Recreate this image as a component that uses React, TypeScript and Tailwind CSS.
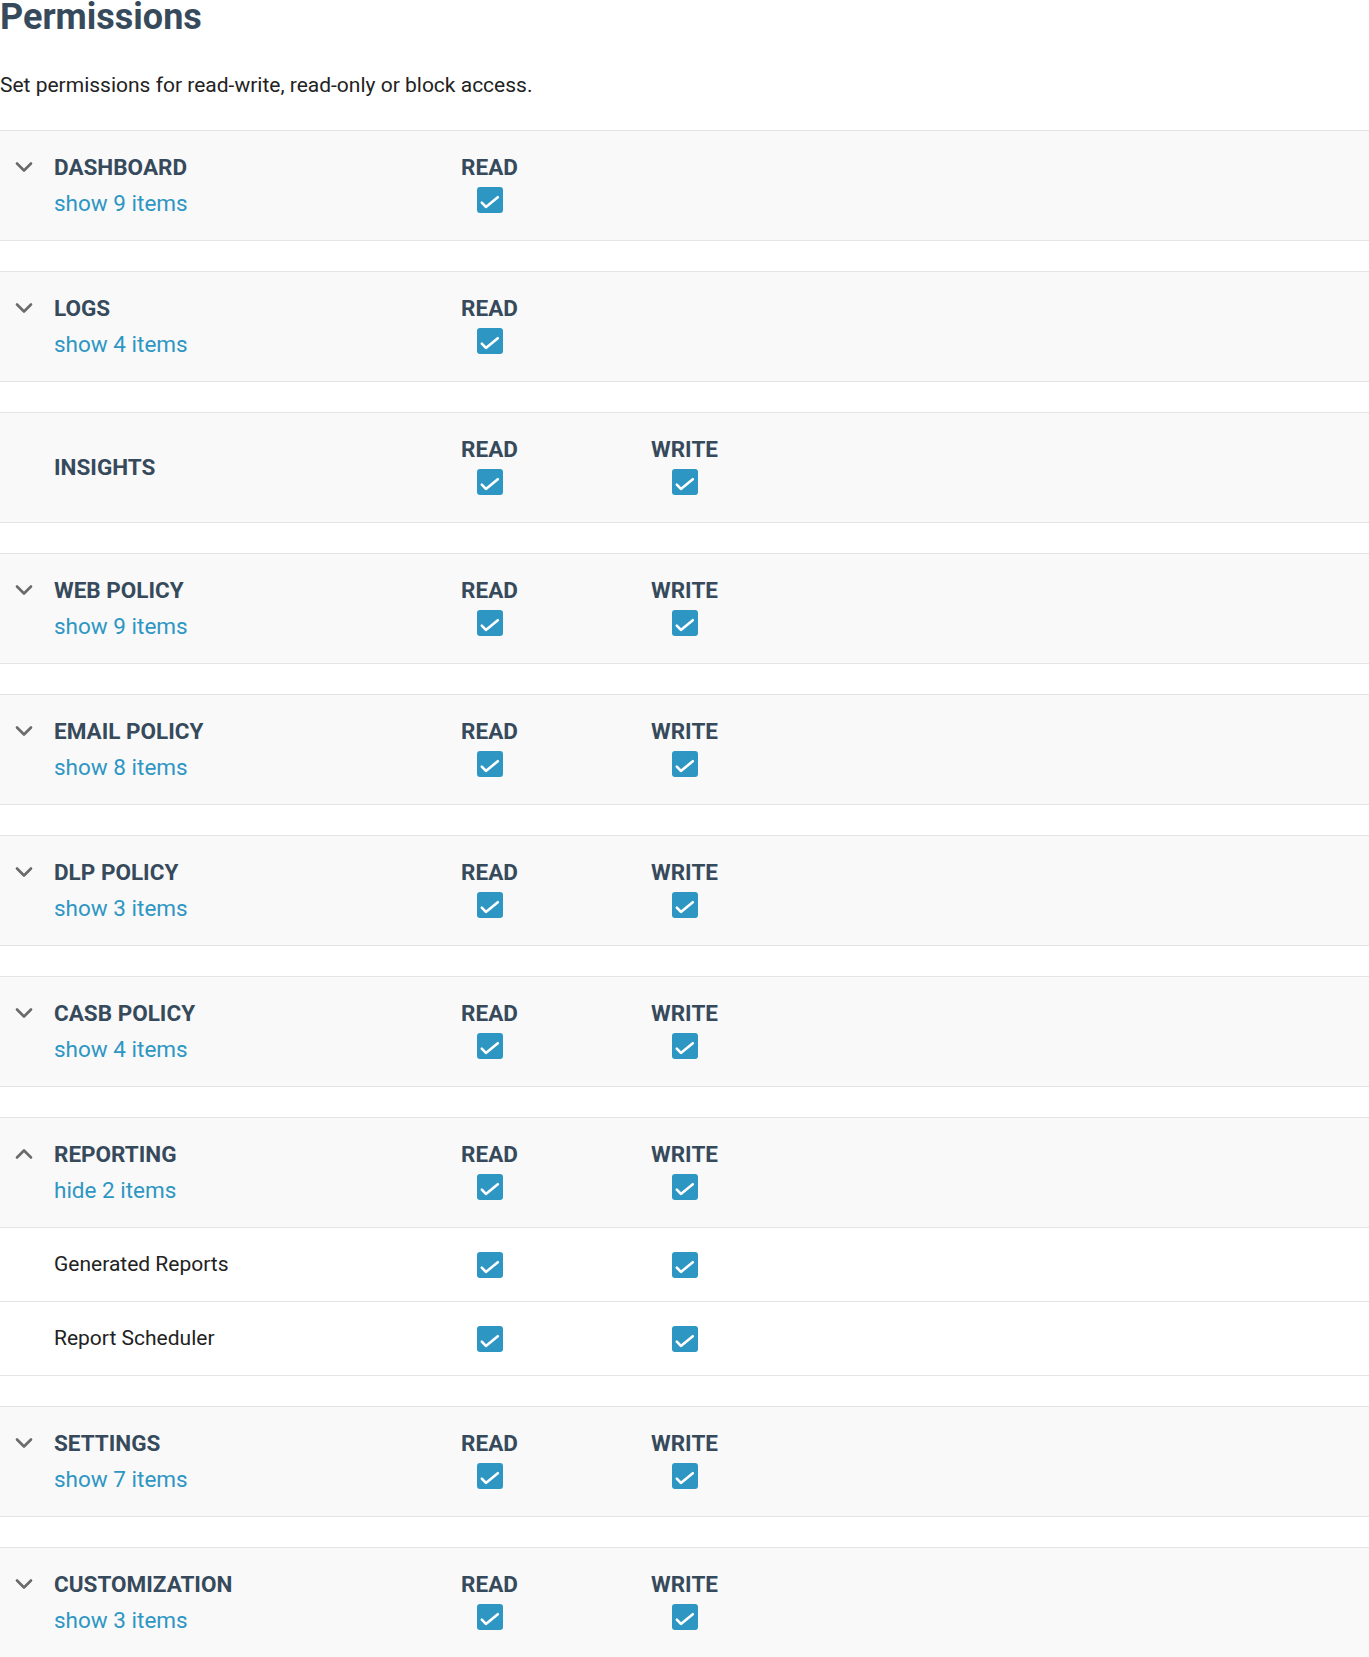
import React from "react"

type Section = {
  title: string
  toggle?: string
  open?: boolean
  write?: boolean
  items?: string[]
}

const sections: Section[] = [
  { title: "DASHBOARD", toggle: "show 9 items" },
  { title: "LOGS", toggle: "show 4 items" },
  { title: "INSIGHTS", write: true },
  { title: "WEB POLICY", toggle: "show 9 items", write: true },
  { title: "EMAIL POLICY", toggle: "show 8 items", write: true },
  { title: "DLP POLICY", toggle: "show 3 items", write: true },
  { title: "CASB POLICY", toggle: "show 4 items", write: true },
  {
    title: "REPORTING",
    toggle: "hide 2 items",
    open: true,
    write: true,
    items: ["Generated Reports", "Report Scheduler"],
  },
  { title: "SETTINGS", toggle: "show 7 items", write: true },
  { title: "CUSTOMIZATION", toggle: "show 3 items", write: true },
]

function Checkbox() {
  return (
    <span className="flex h-[26px] w-[26px] rounded-[3px] bg-[#2e96c3]">
      <svg width="26" height="26" viewBox="0 0 26 26" fill="none">
        <path d="M4.8 15.6 8.9 19.9 20.8 10.2" stroke="white" strokeWidth="2.6" strokeLinecap="round" strokeLinejoin="round" />
      </svg>
    </span>
  )
}

function Chevron({ up }: { up?: boolean }) {
  return (
    <svg width="20" height="12" viewBox="0 0 20 12" fill="none" className="text-[#6b6b6b]">
      <path
        d={up ? "M3 9.5 10 2.5 17 9.5" : "M3 2.5 10 9.5 17 2.5"}
        stroke="currentColor"
        strokeWidth="2.6"
        strokeLinecap="round"
        strokeLinejoin="round"
      />
    </svg>
  )
}

function PermColumn({ label }: { label: string }) {
  return (
    <div className="flex w-[195px] flex-col items-center">
      <div className="h-9 text-[22.5px] leading-9 font-bold text-[#364a5c]">{label}</div>
      <div className="flex h-9 items-start pt-[2px]">
        <Checkbox />
      </div>
    </div>
  )
}

export default function App() {
  return (
    <div className="min-h-[1657px] w-full bg-white font-['Roboto',sans-serif] text-[#222]">
      <h1 className="-mt-[3px] text-[36px] leading-[40px] font-bold text-[#364a5c]">Permissions</h1>
      <p className="mt-[35px] text-[21px] leading-[26px] text-[#222]">
        Set permissions for read-write, read-only or block access.
      </p>

      <div className="mt-[32px]">
        {sections.map((s, i) => (
          <div key={s.title} className={i > 0 ? "mt-[30px]" : ""}>
            <div className="flex h-[111px] items-center border-y border-[#e4e4e4] bg-[#f9f9f9] pb-[2px]">
              <div className="flex w-[392px] items-start">
                <div className="flex h-9 w-[47px] items-center justify-center">
                  {s.toggle && <Chevron up={s.open} />}
                </div>
                <div className="flex flex-col pl-[7px]">
                  <div className="h-9 text-[22.5px] leading-9 font-bold text-[#364a5c]">{s.title}</div>
                  {s.toggle && (
                    <div className="h-9 text-[22.5px] leading-9 text-[#2e96c3]">{s.toggle}</div>
                  )}
                </div>
              </div>
              <PermColumn label="READ" />
              {s.write && <PermColumn label="WRITE" />}
            </div>
            {s.items?.map((item) => (
              <div key={item} className="flex h-[74px] items-center border-b border-[#e4e4e4] bg-white">
                <div className="w-[392px] pl-[54px] text-[21px] text-[#222]">{item}</div>
                <div className="flex w-[195px] justify-center">
                  <Checkbox />
                </div>
                <div className="flex w-[195px] justify-center">
                  <Checkbox />
                </div>
              </div>
            ))}
          </div>
        ))}
      </div>
    </div>
  )
}
